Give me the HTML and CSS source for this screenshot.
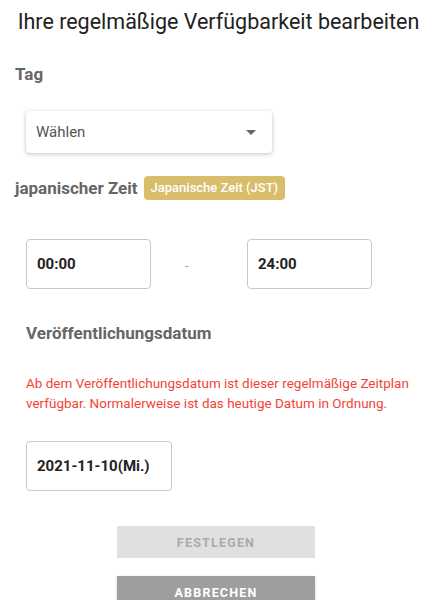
FILE: index.html
```html
<!DOCTYPE html>
<html lang="de">
<head>
  <meta charset="UTF-8">
  <meta name="viewport" content="width=device-width, initial-scale=1.0">
  <title>Verfügbarkeit bearbeiten</title>
  <link rel="stylesheet" href="styles.css">
</head>
<body>
  <h1 class="title">Ihre regelmäßige Verfügbarkeit bearbeiten</h1>

  <div class="section">
    <h2 class="label">Tag</h2>
    <div class="select">
      <span>Wählen</span>
      <span class="arrow"></span>
    </div>
  </div>

  <div class="section">
    <h2 class="label zone">japanischer Zeit <span class="badge">Japanische Zeit (JST)</span></h2>
    <div class="time-row">
      <div class="box">00:00</div>
      <span class="dash">-</span>
      <div class="box">24:00</div>
    </div>
  </div>

  <div class="publish">
    <h2 class="label">Veröffentlichungsdatum</h2>
    <p class="note">Ab dem Veröffentlichungsdatum ist dieser regelmäßige Zeitplan verfügbar. Normalerweise ist das heutige Datum in Ordnung.</p>
    <div class="box date">2021-11-10(Mi.)</div>
  </div>

  <div class="actions">
    <button class="btn disabled">FESTLEGEN</button>
    <button class="btn cancel">ABBRECHEN</button>
  </div>
</body>
</html>
```

FILE: styles.css
```css
* { box-sizing: border-box; }
body {
  margin: 0;
  font-family: Roboto, 'Noto Sans', sans-serif;
  background: #fff;
  color: #222;
}
.title {
  margin: 0;
  padding-top: 8px;
  font-size: 21.5px;
  font-weight: 400;
  line-height: 28px;
  text-align: center;
  color: #222;
}
.label {
  margin: 0;
  font-size: 17px;
  font-weight: 700;
  color: #666;
  line-height: 24px;
}
.section {
  padding: 0 15px;
}
.section:first-of-type .label {
  margin-top: 26px;
}
.select {
  margin: 25px 0 0 11px;
  width: 246px;
  height: 42px;
  display: flex;
  align-items: center;
  justify-content: space-between;
  padding: 0 16px 0 10px;
  font-size: 15px;
  color: #555;
  border-radius: 4px;
  box-shadow: 0 1px 4px rgba(0,0,0,0.25);
}
.arrow {
  width: 0;
  height: 0;
  border-left: 5px solid transparent;
  border-right: 5px solid transparent;
  border-top: 5px solid #666;
}
.zone {
  margin-top: 23px;
  display: flex;
  align-items: center;
  gap: 6px;
}
.badge {
  background: #d8bd6a;
  color: #fff;
  font-size: 13px;
  font-weight: 500;
  padding: 3px 7px;
  border-radius: 4px;
  line-height: 18px;
}
.time-row {
  margin: 39px 0 0 11px;
  display: flex;
  align-items: center;
}
.box {
  width: 125px;
  height: 50px;
  border: 1px solid #c8c8c8;
  border-radius: 4px;
  display: flex;
  align-items: center;
  padding-left: 10px;
  font-size: 15px;
  font-weight: 700;
  color: #222;
}
.dash {
  width: 96px;
  padding-left: 34px;
  color: #999;
  font-size: 12px;
  padding-top: 4px;
}
.publish {
  padding: 0 26px;
  margin-top: 32px;
}
.note {
  margin: 28px 0 0;
  font-size: 13.5px;
  line-height: 20px;
  color: #f44336;
}
.date {
  margin-top: 28px;
  width: 146px;
}
.actions {
  margin-top: 35px;
  display: flex;
  flex-direction: column;
  align-items: center;
  gap: 18px;
}
.btn {
  width: 198px;
  height: 32px;
  border: none;
  font-family: Roboto, sans-serif;
  font-size: 12.5px;
  font-weight: 700;
  letter-spacing: 1.2px;
  margin-right: 5px;
}
.disabled {
  background: #e0e0e0;
  color: #aaa;
}
.cancel {
  background: #9e9e9e;
  color: #fff;
  box-shadow: 0 1px 3px rgba(0,0,0,0.2);
}
```
